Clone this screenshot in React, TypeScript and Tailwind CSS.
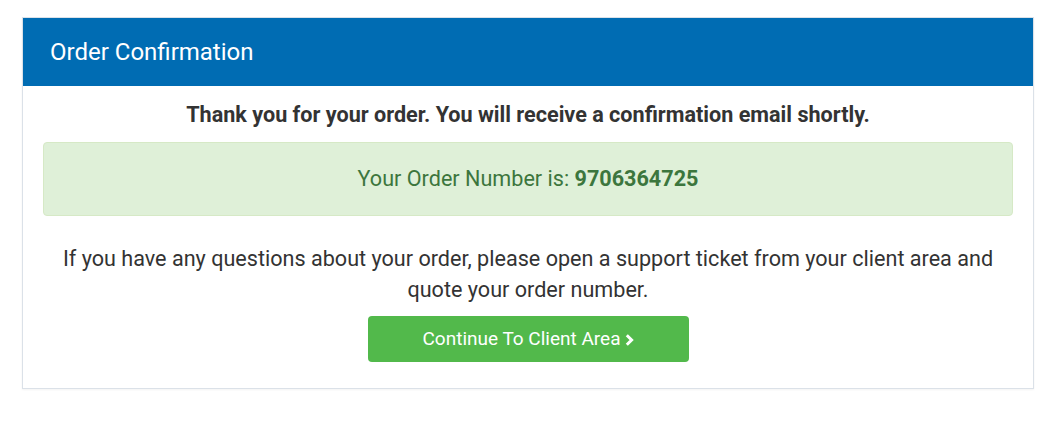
import React from 'react';

export default function App() {
  return (
    <div className="min-h-screen bg-white pt-[17px] pl-[22px] pr-[19px]" style={{ fontFamily: 'Roboto, "Liberation Sans", sans-serif' }}>
      <div className="border border-[#dbe1e8] shadow-[0_1px_2px_rgba(0,0,0,0.05)] bg-white">
        <div className="bg-[#006cb3] h-[68px] flex items-center pl-[27px]">
          <h1 className="text-white text-[24px] font-normal">Order Confirmation</h1>
        </div>
        <div className="px-[20px] pt-[13px] pb-[26px] text-center text-[#333]">
          <p className="text-[21.6px] font-bold leading-[31px]">
            Thank you for your order. You will receive a confirmation email shortly.
          </p>
          <div className="mt-[12px] h-[74px] flex items-center justify-center rounded border border-[#d6e9c6] bg-[#dff0d8] text-[#3c763d] text-[21.6px]">
            <span>
              Your Order Number is: <strong className="font-bold">9706364725</strong>
            </span>
          </div>
          <p className="mt-[27px] text-[21.6px] leading-[31px]">
            If you have any questions about your order, please open a support ticket from your client area and quote your order number.
          </p>
          <div className="mt-[11px] flex justify-center">
            <button className="w-[321px] h-[46px] rounded bg-[#52b94b] text-white text-[19px] flex items-center justify-center gap-[4px]">
              Continue To Client Area
              <svg width="9" height="12" viewBox="0 0 9 12" className="mt-[1px]">
                <path d="M1.8 1.3 L6.6 6 L1.8 10.7" fill="none" stroke="white" strokeWidth="3" />
              </svg>
            </button>
          </div>
        </div>
      </div>
    </div>
  );
}
